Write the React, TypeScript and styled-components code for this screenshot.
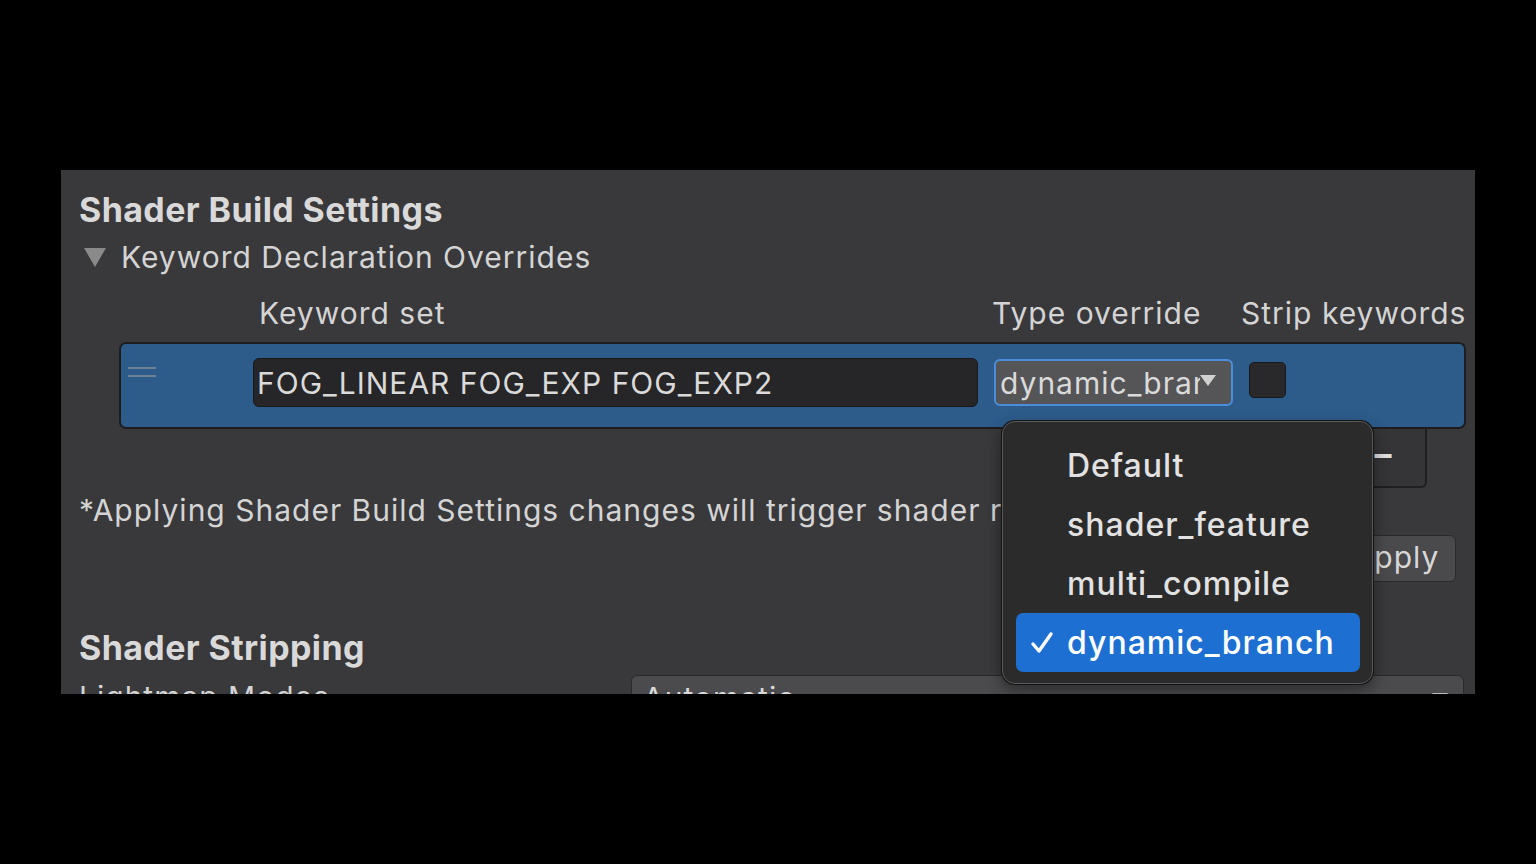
import styled, { createGlobalStyle } from 'styled-components';

const GlobalStyle = createGlobalStyle`
  html, body {
    margin: 0;
    padding: 0;
    background: #000;
  }
  body {
    font-family: Inter, "Noto Sans", sans-serif;
    color: #d4d4d4;
    letter-spacing: 1px;
  }
`;

const Stage = styled.div`
  width: 1536px;
  height: 864px;
  padding-top: 170px;
  box-sizing: border-box;
`;

const Panel = styled.div`
  position: relative;
  margin-left: 61px;
  width: 1414px;
  height: 524px;
  background: #39383b;
  overflow: hidden;
  padding: 20px 0 0 18px;
  box-sizing: border-box;
`;

const Heading = styled.div<{ $gap?: number }>`
  font-size: 34px;
  font-weight: 700;
  line-height: 40px;
  letter-spacing: 0.4px;
  color: #d9d9d9;
  margin-top: ${(p) => p.$gap ?? 0}px;
`;

const Foldout = styled.div`
  display: flex;
  align-items: center;
  gap: 15px;
  margin-top: 7px;
  font-size: 30px;
  line-height: 40px;
  padding-left: 5px;
`;

const Triangle = styled.span`
  width: 0;
  height: 0;
  border-left: 11px solid transparent;
  border-right: 11px solid transparent;
  border-top: 19px solid #8a8a8a;
`;

const Columns = styled.div`
  display: grid;
  grid-template-columns: 116px 725px 239px 1fr;
  column-gap: 16px;
  align-items: center;
`;

const HeaderRow = styled(Columns)`
  margin: 16px 0 0 42px;
  font-size: 30px;
  line-height: 40px;
  height: 40px;
  white-space: nowrap;
`;

const HeaderCell = styled.span<{ $shift: number }>`
  margin-left: ${(p) => p.$shift}px;
`;

const List = styled.div`
  margin: 9px 9px 0 40px;
`;

const ListRow = styled(Columns)`
  height: 87px;
  box-sizing: border-box;
  border: 2px solid #1d1d1f;
  border-radius: 7px;
  background: #2d5c8b;
  padding-bottom: 6px;
`;

const Handle = styled.div`
  align-self: start;
  margin: 23px 0 0 7px;
  width: 28px;
  height: 10px;
  border-top: 2px solid #7d8b99;
  border-bottom: 2px solid #7d8b99;
  box-sizing: border-box;
  opacity: 0.8;
`;

const TextField = styled.div`
  height: 49px;
  box-sizing: border-box;
  background: #262527;
  border: 1px solid #19191a;
  border-radius: 6px;
  font-size: 30px;
  line-height: 49px;
  color: #dadada;
  overflow: hidden;
  white-space: nowrap;
  text-indent: 3px;
`;

const Select = styled.div`
  height: 47px;
  box-sizing: border-box;
  background: #555457;
  border: 2px solid #4c8ddb;
  border-radius: 6px;
  display: flex;
  align-items: center;
  padding-left: 4px;
  font-size: 30px;
  color: #dadada;
`;

const SelectLabel = styled.span`
  width: 200px;
  overflow: hidden;
  white-space: nowrap;
`;

const Arrow = styled.span<{ $color?: string }>`
  width: 0;
  height: 0;
  border-left: 8px solid transparent;
  border-right: 8px solid transparent;
  border-top: 11px solid ${(p) => p.$color ?? '#d0d0d0'};
  margin-top: -4px;
`;

const Checkbox = styled.div`
  width: 37px;
  height: 36px;
  box-sizing: border-box;
  background: #29282a;
  border: 1px solid #18181a;
  border-radius: 5px;
  margin-top: -6px;
`;

const Footer = styled.div`
  display: flex;
  justify-content: flex-end;
  margin-right: 39px;
`;

const FooterButtons = styled.div`
  display: flex;
  width: 170px;
  height: 59px;
  box-sizing: border-box;
  background: #353437;
  border: 2px solid #1f1f21;
  border-top: none;
  border-radius: 0 0 6px 6px;
`;

const FooterButton = styled.span`
  flex: 1;
  display: flex;
  align-items: center;
  justify-content: center;
  font-size: 34px;
  font-weight: 700;
  color: #e0e0e0;
  padding-bottom: 8px;
`;

const Note = styled.div`
  margin-top: 2px;
  font-size: 30px;
  line-height: 40px;
  white-space: nowrap;
`;

const ButtonBar = styled.div`
  display: flex;
  justify-content: flex-end;
  margin: 5px 19px 0 0;
`;

const Button = styled.div`
  width: 120px;
  height: 47px;
  box-sizing: border-box;
  background: #4a494c;
  border: 1px solid #2a2a2c;
  border-radius: 6px;
  font-size: 30px;
  line-height: 43px;
  text-align: center;
  color: #d8d8d8;
`;

const FieldRow = styled.div`
  display: flex;
  align-items: flex-start;
  margin: 7px 11px 0 0;
  font-size: 30px;
`;

const FieldLabel = styled.span`
  width: 552px;
  line-height: 40px;
  margin-top: 2px;
`;

const Dropdown = styled.div`
  flex: 1;
  height: 48px;
  box-sizing: border-box;
  background: #4b4a4d;
  border: 1px solid #2a2a2c;
  border-radius: 6px;
  display: flex;
  justify-content: space-between;
  padding: 0 15px 0 11px;
  line-height: 44px;
  color: #d8d8d8;

  ${Arrow} {
    margin-top: 17px;
  }
`;

const Popup = styled.div`
  position: absolute;
  left: 941px;
  top: 251px;
  width: 371px;
  height: 263px;
  box-sizing: border-box;
  padding: 14px 12px 13px 13px;
  background: #2c2b2b;
  border: 1px solid #59585a;
  border-radius: 13px;
  box-shadow: 0 0 0 1px #151515, 0 6px 16px rgba(0, 0, 0, 0.45);
`;

const MenuItem = styled.div<{ $selected?: boolean }>`
  display: flex;
  align-items: center;
  height: 59px;
  border-radius: 7px;
  background: ${(p) => (p.$selected ? '#1e6fd2' : 'transparent')};
  font-size: 32px;
  font-weight: 500;
  letter-spacing: 1px;
  color: ${(p) => (p.$selected ? '#ffffff' : '#e2e2e2')};
`;

const Check = styled.span`
  width: 51px;
  display: flex;
  justify-content: flex-end;
  padding-right: 13px;
  box-sizing: border-box;
`;

const options = ['Default', 'shader_feature', 'multi_compile', 'dynamic_branch'];
const selected = 'dynamic_branch';

export default function App() {
  return (
    <Stage>
      <GlobalStyle />
      <Panel>
        <Heading>Shader Build Settings</Heading>
        <Foldout>
          <Triangle />
          Keyword Declaration Overrides
        </Foldout>
        <HeaderRow>
          <span />
          <HeaderCell $shift={6}>Keyword set</HeaderCell>
          <HeaderCell $shift={-2}>Type override</HeaderCell>
          <HeaderCell $shift={-8}>Strip keywords</HeaderCell>
        </HeaderRow>
        <List>
          <ListRow>
            <Handle />
            <TextField>FOG_LINEAR FOG_EXP FOG_EXP2</TextField>
            <Select>
              <SelectLabel>dynamic_branch</SelectLabel>
              <Arrow />
            </Select>
            <Checkbox />
          </ListRow>
          <Footer>
            <FooterButtons>
              <FooterButton>+</FooterButton>
              <FooterButton>–</FooterButton>
            </FooterButtons>
          </Footer>
        </List>
        <Note>*Applying Shader Build Settings changes will trigger shader recompilation.</Note>
        <ButtonBar>
          <Button>Apply</Button>
        </ButtonBar>
        <Heading $gap={46}>Shader Stripping</Heading>
        <FieldRow>
          <FieldLabel>Lightmap Modes</FieldLabel>
          <Dropdown>
            Automatic
            <Arrow $color="#bdbdbd" />
          </Dropdown>
        </FieldRow>
        <Popup>
          {options.map((o) => (
            <MenuItem key={o} $selected={o === selected}>
              <Check>
                {o === selected && (
                  <svg width="24" height="26" viewBox="0 0 24 26">
                    <path d="M3 14 L9 21 L21 4" fill="none" stroke="#fff" strokeWidth="3.4" strokeLinecap="round" strokeLinejoin="round" />
                  </svg>
                )}
              </Check>
              {o}
            </MenuItem>
          ))}
        </Popup>
      </Panel>
    </Stage>
  );
}
